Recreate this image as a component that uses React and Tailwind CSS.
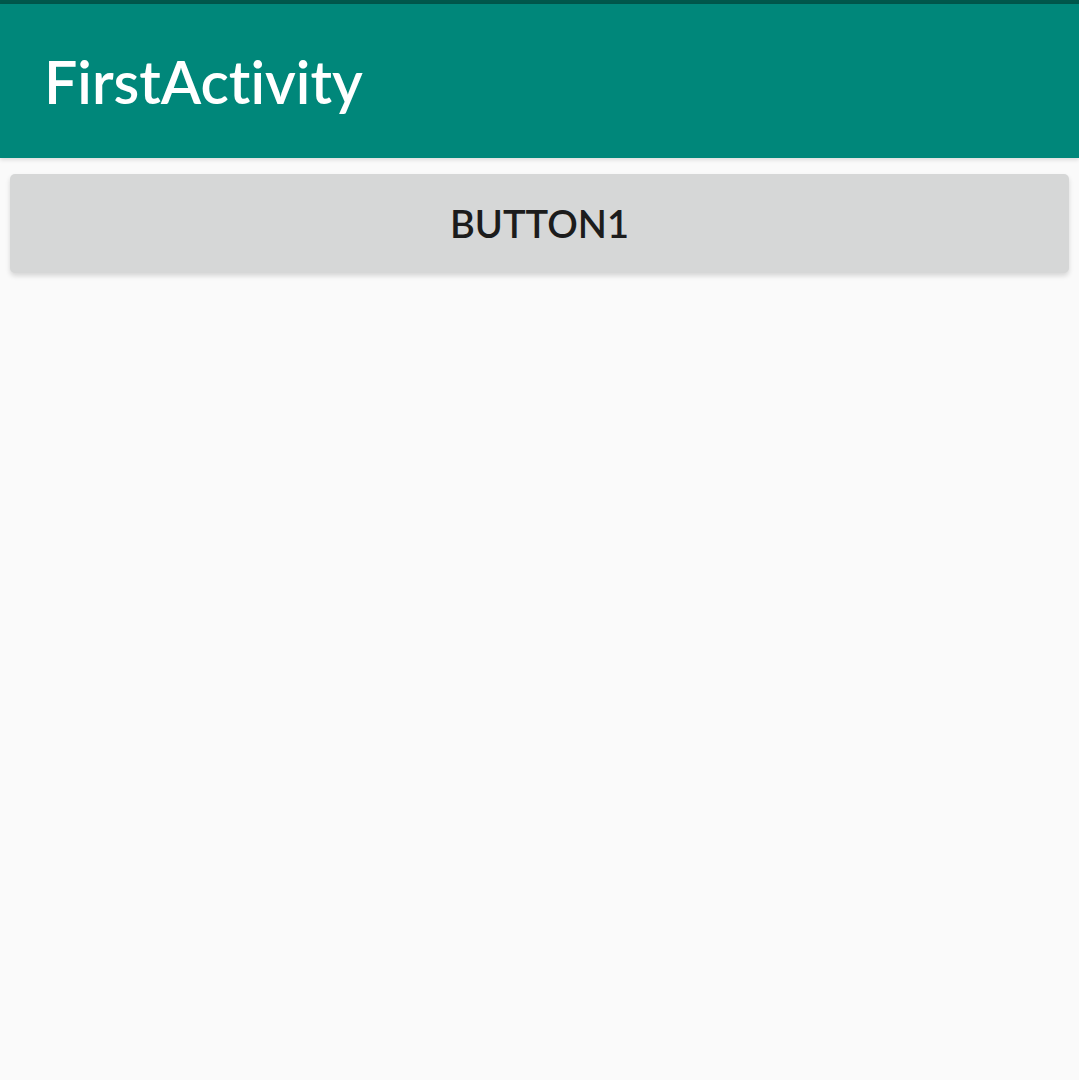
import React from 'react';

const App = () => {
  return (
    <div className="min-h-[1080px] w-full bg-[#fafafa] font-['Lato',sans-serif] [font-variant-ligatures:none]">
      {/* status strip + toolbar */}
      <div className="h-[4px] bg-[#00574b]" />
      <div className="flex h-[154px] items-center bg-[#00877a] pl-[44px] shadow-[0_2px_4px_rgba(0,0,0,0.12)]">
        <h1 className="text-[59px] font-semibold leading-none text-white">FirstActivity</h1>
      </div>

      <div className="px-[10px] pt-[16px]">
        <button className="flex h-[99px] w-full items-center justify-center rounded-[5px] bg-[#d6d7d7] text-[38px] font-semibold text-[#1c1c1c] shadow-[0_3px_5px_rgba(0,0,0,0.14)]">
          BUTTON1
        </button>
      </div>
    </div>
  );
};

export default App;
